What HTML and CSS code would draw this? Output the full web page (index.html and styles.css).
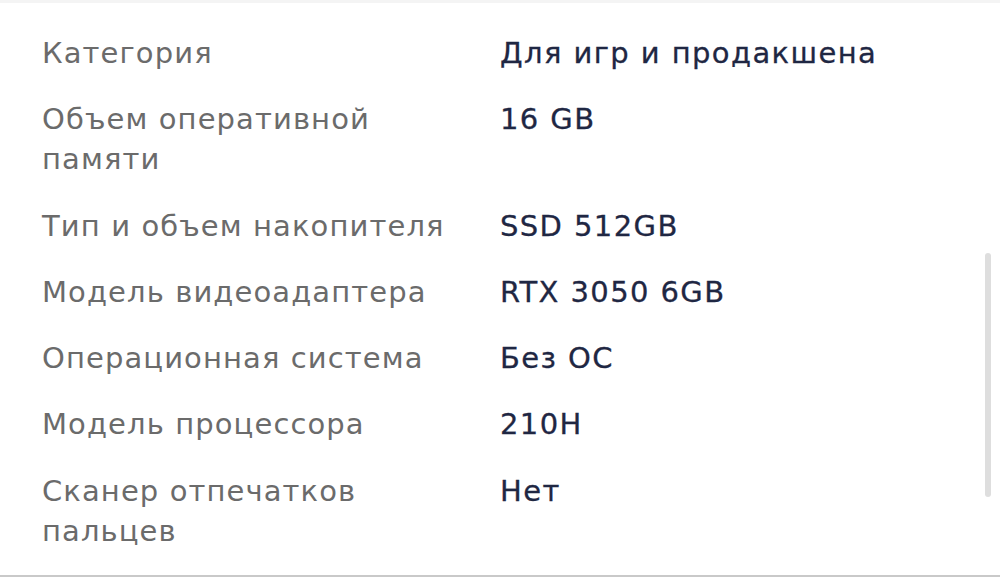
FILE: index.html
```html
<!DOCTYPE html>
<html lang="ru">
<head>
<meta charset="utf-8">
<title>Характеристики</title>
<link rel="stylesheet" href="styles.css">
</head>
<body>
<div class="page">
  <div class="topbar"></div>
  <dl class="specs">
    <dt class="label">Категория</dt>
    <dd class="value">Для игр и продакшена</dd>
    <dt class="label">Объем оперативной памяти</dt>
    <dd class="value">16 GB</dd>
    <dt class="label">Тип и объем накопителя</dt>
    <dd class="value">SSD 512GB</dd>
    <dt class="label">Модель видеоадаптера</dt>
    <dd class="value">RTX 3050 6GB</dd>
    <dt class="label">Операционная система</dt>
    <dd class="value">Без ОС</dd>
    <dt class="label">Модель процессора</dt>
    <dd class="value">210H</dd>
    <dt class="label">Сканер отпечатков пальцев</dt>
    <dd class="value">Нет</dd>
  </dl>
  <div class="scrollbar"></div>
</div>
</body>
</html>
```

FILE: styles.css
```css
html, body {
  margin: 0;
  padding: 0;
  background: #ffffff;
}
.page {
  position: relative;
  width: 1000px;
  height: 577px;
  overflow: hidden;
  box-sizing: border-box;
  border-bottom: 2px solid #c9c9c9;
  font-family: "DejaVu Sans", sans-serif;
  font-size: 29px;
  line-height: 40px;
  letter-spacing: 1.1px;
}
.topbar {
  height: 3px;
  background: #f4f4f4;
}
.specs {
  margin: 0;
  padding: 30px 0 0 42px;
  display: grid;
  grid-template-columns: 420px 1fr;
  column-gap: 38px;
  row-gap: 26.3px;
}
.label {
  margin: 0;
  color: #6b6b6b;
}
.value {
  margin: 0;
  color: #1f2743;
  letter-spacing: 1.4px;
  -webkit-text-stroke: 0.3px #1f2743;
}
.scrollbar {
  position: absolute;
  right: 9px;
  top: 253px;
  width: 6px;
  height: 244px;
  border-radius: 3px;
  background: #dedede;
}
```
